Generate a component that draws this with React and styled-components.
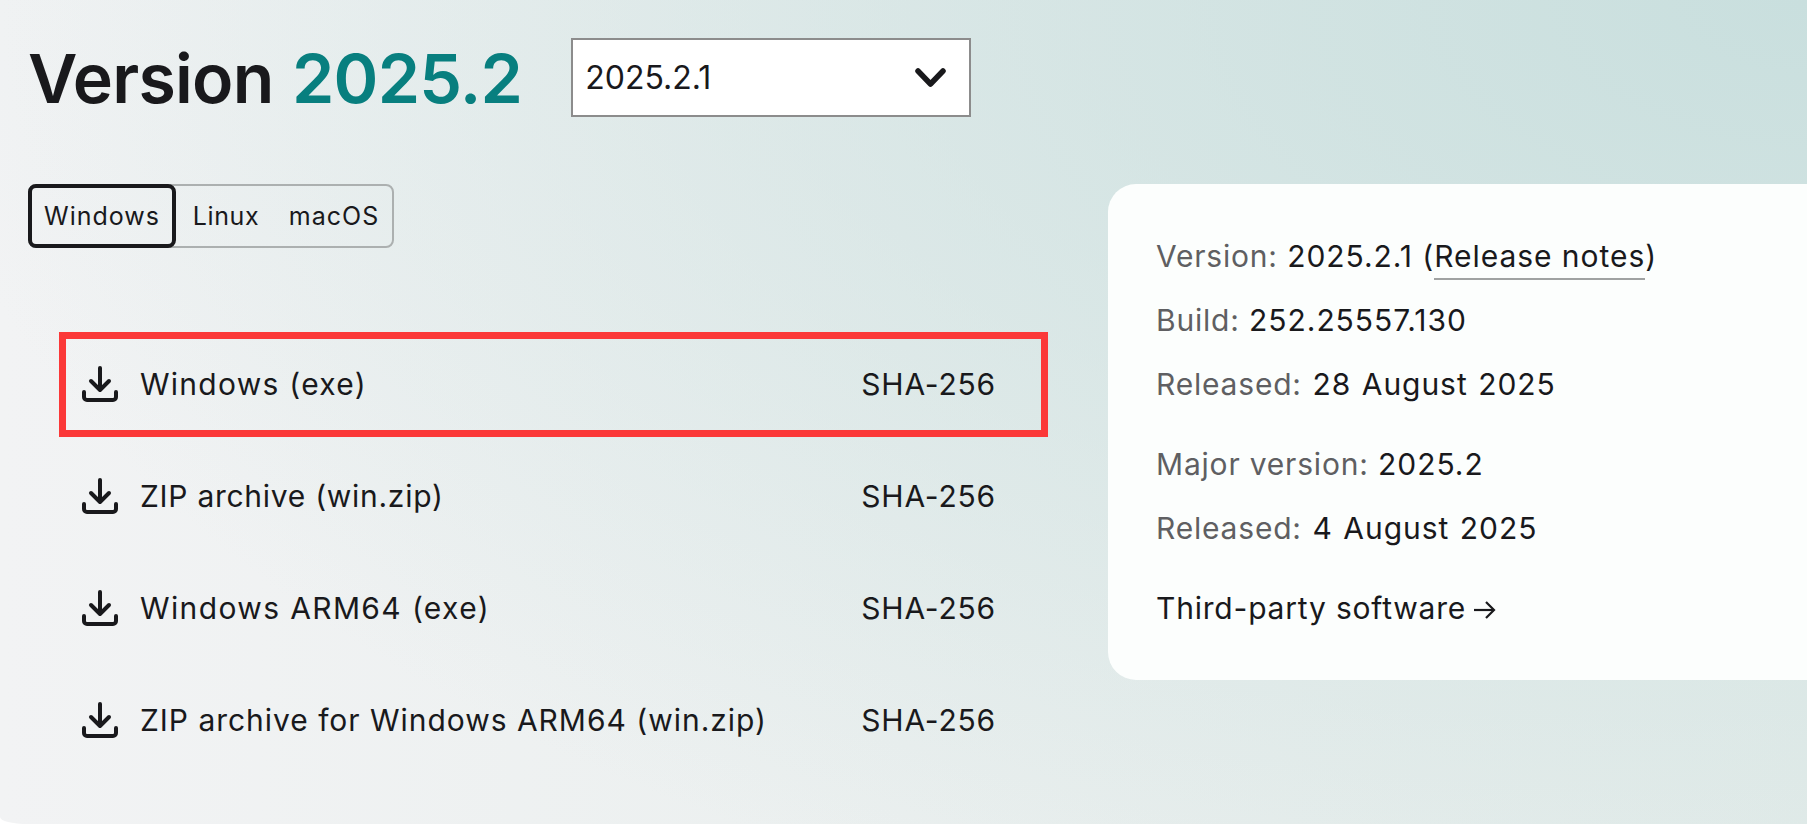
import styled, { createGlobalStyle } from "styled-components";

const GlobalStyle = createGlobalStyle`
  html, body {
    margin: 0;
    padding: 0;
    background: #ffffff;
  }
  body {
    font-family: Inter, "Noto Sans", sans-serif;
    color: #19191c;
  }
`;

const Page = styled.div`
  box-sizing: border-box;
  width: 1807px;
  height: 824px;
  overflow: hidden;
  border-bottom-left-radius: 28px 7px;
  background:
    radial-gradient(1900px 1000px at 100% 0%, #c9dfde 0%, rgba(201, 223, 222, 0) 100%),
    linear-gradient(90deg, #f2f3f4 0%, #e4ecea 100%);
  padding: 38px 0 0 28px;
`;

const Header = styled.div`
  display: flex;
  align-items: flex-start;
  gap: 49px;
`;

const Title = styled.h1`
  margin: 0;
  font-size: 68px;
  line-height: 80px;
  font-weight: 600;
  letter-spacing: -0.76px;
  word-spacing: 2px;
  color: #19191c;
`;

const Accent = styled.span`
  color: #087f7f;
`;

const Select = styled.div`
  box-sizing: border-box;
  width: 400px;
  height: 79px;
  display: flex;
  align-items: center;
  justify-content: space-between;
  padding: 0 23px 0 12px;
  background: #ffffff;
  border: 2px solid #8c8c8c;
  font-size: 32px;
`;

const Content = styled.div`
  display: grid;
  grid-template-columns: 1080px 1fr;
  margin-top: 66px;
`;

const Tabs = styled.div`
  box-sizing: border-box;
  width: 366px;
  height: 64px;
  display: flex;
  border: 2px solid #acb0b0;
  border-radius: 8px;
`;

const Tab = styled.div`
  box-sizing: border-box;
  height: 64px;
  margin: -2px 0;
  display: flex;
  align-items: center;
  justify-content: center;
  font-size: 25px;
  letter-spacing: ${(p) => p.$tracking}px;
  width: ${(p) => p.$width}px;
  ${(p) => p.$active && "margin-left: -2px; border: 4px solid #19191c; border-radius: 8px;"}
`;

const Rows = styled.div`
  display: flex;
  flex-direction: column;
  margin: 84px 0 0 31px;
`;

const Row = styled.div`
  box-sizing: border-box;
  width: 989px;
  height: ${(p) => (p.$marked ? 105 : 112)}px;
  display: flex;
  align-items: center;
  padding: 0 ${(p) => (p.$marked ? 45 : 52)}px ${(p) => (p.$marked ? 2 : 0)}px ${(p) => (p.$marked ? 16 : 23)}px;
  font-size: 30px;
  ${(p) => p.$marked && "border: 7px solid #fb3838; margin-bottom: 3px;"}
`;

const RowLabel = styled.span`
  flex: 1;
  margin-left: 22px;
  letter-spacing: ${(p) => p.$tracking}px;
`;

const Checksum = styled.span`
  letter-spacing: 0.8px;
`;

const Card = styled.div`
  box-sizing: border-box;
  width: 760px;
  height: 496px;
  padding: 52px 48px;
  background: #fcfefd;
  border-radius: 28px;
  font-size: 30px;
  letter-spacing: 0.95px;
`;

const InfoLine = styled.div`
  height: 64px;
  line-height: 40px;
  margin-bottom: ${(p) => (p.$gap ? 16 : 0)}px;
  ${(p) => p.$link && "letter-spacing: 0.8px;"}
  ${(p) => p.$date && "word-spacing: 1.2px;"}
`;

const Muted = styled.span`
  color: #5f5f62;
  letter-spacing: 0.8px;
`;

const NotesLink = styled.span`
  border-bottom: 2px solid #a0a2a2;
  padding-bottom: 4px;
`;

const Arrow = styled.svg`
  margin-left: 8px;
  vertical-align: -1px;
`;

function DownloadIcon() {
  return (
    <svg width="36" height="36" viewBox="0 0 36 36" fill="none" stroke="#19191c" strokeWidth="4" strokeLinecap="round" strokeLinejoin="round">
      <path d="M18 2v21" />
      <path d="M9 15l9 9 9-9" />
      <path d="M2 26v5a3 3 0 0 0 3 3h26a3 3 0 0 0 3-3v-5" />
    </svg>
  );
}

function Chevron() {
  return (
    <svg width="31" height="19" viewBox="0 0 31 19" fill="none" stroke="#19191c" strokeWidth="5.5" strokeLinecap="round" strokeLinejoin="round">
      <path d="M3 3l12.5 13L28 3" />
    </svg>
  );
}

function ArrowIcon() {
  return (
    <Arrow width="22" height="20" viewBox="0 0 22 20" fill="none" stroke="#19191c" strokeWidth="2.2">
      <path d="M0 10h20" />
      <path d="M12 2l8 8-8 8" />
    </Arrow>
  );
}

const downloads = [
  { name: "Windows (exe)", tracking: 1.27 },
  { name: "ZIP archive (win.zip)", tracking: 0.72 },
  { name: "Windows ARM64 (exe)", tracking: 1.37 },
  { name: "ZIP archive for Windows ARM64 (win.zip)", tracking: 0.97 },
];

export default function App() {
  return (
    <>
      <GlobalStyle />
      <Page>
        <Header>
          <Title>
            Version <Accent>2025.2</Accent>
          </Title>
          <Select>
            2025.2.1
            <Chevron />
          </Select>
        </Header>
        <Content>
          <div>
            <Tabs>
              <Tab $active $width={148} $tracking={1}>Windows</Tab>
              <Tab $width={100} $tracking={0.6}>Linux</Tab>
              <Tab $width={116} $tracking={1}>macOS</Tab>
            </Tabs>
            <Rows>
              {downloads.map((item, i) => (
                <Row key={item.name} $marked={i === 0}>
                  <DownloadIcon />
                  <RowLabel $tracking={item.tracking}>{item.name}</RowLabel>
                  <Checksum>SHA-256</Checksum>
                </Row>
              ))}
            </Rows>
          </div>
          <Card>
            <InfoLine><Muted>Version:</Muted> 2025.2.1 (<NotesLink>Release notes</NotesLink>)</InfoLine>
            <InfoLine><Muted>Build:</Muted> 252.25557.130</InfoLine>
            <InfoLine $gap $date><Muted>Released:</Muted> 28 August 2025</InfoLine>
            <InfoLine><Muted>Major version:</Muted> 2025.2</InfoLine>
            <InfoLine $gap $date><Muted>Released:</Muted> 4 August 2025</InfoLine>
            <InfoLine $link>Third-party software<ArrowIcon /></InfoLine>
          </Card>
        </Content>
      </Page>
    </>
  );
}
